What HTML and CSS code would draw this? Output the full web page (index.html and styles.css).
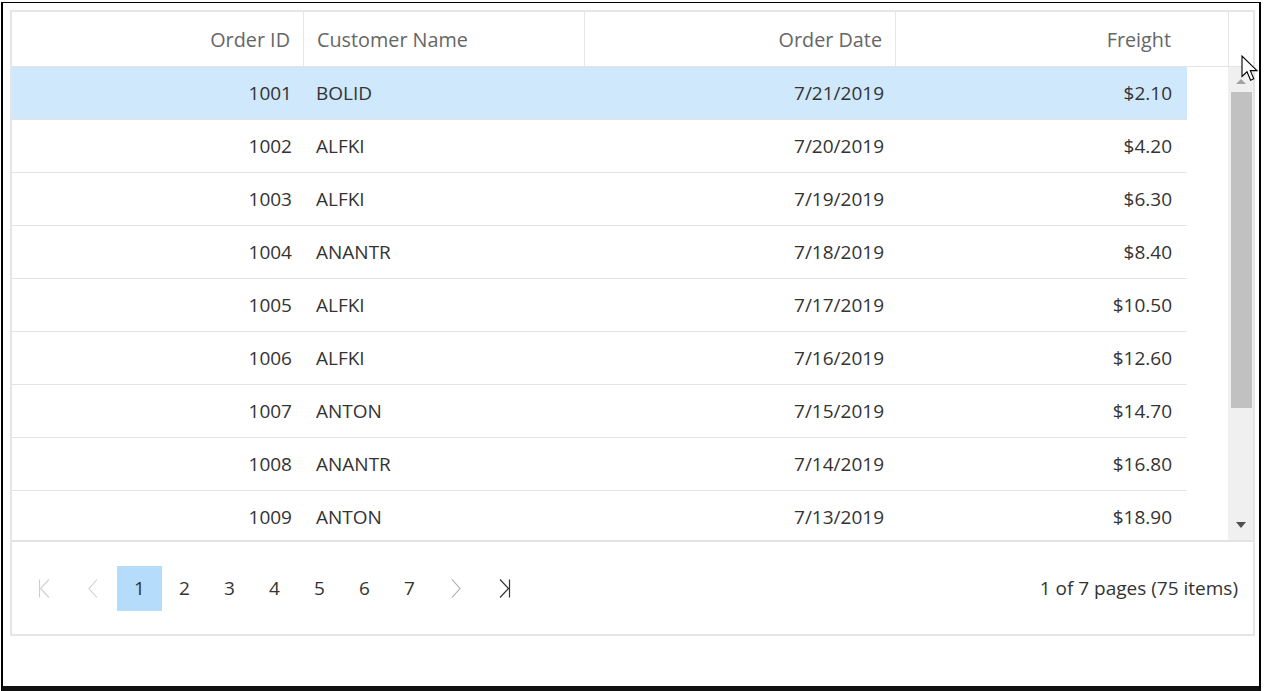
FILE: index.html
```html
<!DOCTYPE html>
<html>
<head>
<meta charset="utf-8">
<link rel="stylesheet" href="styles.css">
</head>
<body>
<div class="frame">
  <div class="grid">
    <div class="header">
      <div class="hcell right c1">Order ID</div>
      <div class="hcell left c2">Customer Name</div>
      <div class="hcell right c3">Order Date</div>
      <div class="hcell right c4">Freight</div>
      <div class="hcell filler"></div>
    </div>
    <div class="body">
      <div class="content">
        <div class="row selected"><div class="cell right">1001</div><div class="cell left">BOLID</div><div class="cell right">7/21/2019</div><div class="cell right last">$2.10</div></div>
        <div class="row"><div class="cell right">1002</div><div class="cell left">ALFKI</div><div class="cell right">7/20/2019</div><div class="cell right last">$4.20</div></div>
        <div class="row"><div class="cell right">1003</div><div class="cell left">ALFKI</div><div class="cell right">7/19/2019</div><div class="cell right last">$6.30</div></div>
        <div class="row"><div class="cell right">1004</div><div class="cell left">ANANTR</div><div class="cell right">7/18/2019</div><div class="cell right last">$8.40</div></div>
        <div class="row"><div class="cell right">1005</div><div class="cell left">ALFKI</div><div class="cell right">7/17/2019</div><div class="cell right last">$10.50</div></div>
        <div class="row"><div class="cell right">1006</div><div class="cell left">ALFKI</div><div class="cell right">7/16/2019</div><div class="cell right last">$12.60</div></div>
        <div class="row"><div class="cell right">1007</div><div class="cell left">ANTON</div><div class="cell right">7/15/2019</div><div class="cell right last">$14.70</div></div>
        <div class="row"><div class="cell right">1008</div><div class="cell left">ANANTR</div><div class="cell right">7/14/2019</div><div class="cell right last">$16.80</div></div>
        <div class="row"><div class="cell right">1009</div><div class="cell left">ANTON</div><div class="cell right">7/13/2019</div><div class="cell right last">$18.90</div></div>
      </div>
      <div class="scrollbar">
        <div class="arrow up"></div>
        <div class="thumb"></div>
        <div class="spacer"></div>
        <div class="arrow down"></div>
      </div>
    </div>
    <div class="pager">
      <div class="pages">
        <span class="nav disabled">
          <svg width="12" height="19" viewBox="0 0 12 19"><path d="M1.5 0.5V18.5M11 0.5L2.5 9.5L11 18.5" fill="none" stroke="currentColor" stroke-width="1.1"/></svg>
        </span>
        <span class="nav disabled">
          <svg width="10" height="19" viewBox="0 0 10 19"><path d="M9 0.5L1 9.5L9 18.5" fill="none" stroke="currentColor" stroke-width="1.1"/></svg>
        </span>
        <span class="num active">1</span>
        <span class="num">2</span>
        <span class="num">3</span>
        <span class="num">4</span>
        <span class="num">5</span>
        <span class="num">6</span>
        <span class="num">7</span>
        <span class="nav next">
          <svg width="10" height="19" viewBox="0 0 10 19"><path d="M1 0.5L9 9.5L1 18.5" fill="none" stroke="currentColor" stroke-width="1.1"/></svg>
        </span>
        <span class="nav lastnav">
          <svg width="12" height="19" viewBox="0 0 12 19"><path d="M10.5 0.5V18.5M1 0.5L9.5 9.5L1 18.5" fill="none" stroke="currentColor" stroke-width="1.2"/></svg>
        </span>
      </div>
      <div class="info">1 of 7 pages (75 items)</div>
    </div>
  </div>
  <svg class="cursor" width="19" height="28" viewBox="0 0 19 28"><path d="M1 1V21.5L6 16.8L9.6 25.2L12.8 23.8L9.3 15.6H16Z" fill="#fff" stroke="#000" stroke-width="1.1" stroke-linejoin="miter"/></svg>
</div>
</body>
</html>
```
FILE: styles.css
```css
* { box-sizing: border-box; }
html, body { margin: 0; padding: 0; background: #fff; }
body {
  font-family: "Open Sans", "Liberation Sans", sans-serif;
  font-size: 19px;
  color: #333;
  width: 1264px;
  height: 691px;
  overflow: hidden;
}
.frame {
  position: relative;
  margin: 2px 0 0 1px;
  width: 1260px;
  height: 689px;
  border-left: 2px solid #000;
  border-top: 1px solid #000;
  border-right: 2px solid #000;
  border-bottom: 5px solid #111;
  padding: 7px 0 0 7px;
}
.grid {
  width: 1245px;
  border: 2px solid #e6e6e6;
  background: #fff;
}
.header {
  display: grid;
  grid-template-columns: 292px 281px 311px 333px 24px;
  height: 55px;
  border-bottom: 1px solid #e3e3e3;
  color: #666;
  font-size: 19.8px;
}
.hcell {
  display: flex;
  align-items: center;
  border-right: 1px solid #e6e6e6;
  height: 54px;
}
.hcell.filler { border-right: none; }
.hcell.right { justify-content: flex-end; padding-right: 13px; }
.hcell.left { padding-left: 13px; }
.hcell.c4 { padding-right: 57px; }
.body {
  display: flex;
  height: 475px;
  border-bottom: 2px solid #e3e3e3;
}
.content {
  width: 1216px;
  overflow: hidden;
}
.row {
  display: grid;
  grid-template-columns: 292px 281px 311px 291px;
  width: 1175px;
  height: 53px;
  border-bottom: 1px solid #e3e3e3;
}
.row.selected { background: #cfe8fc; }
.cell {
  display: flex;
  align-items: center;
  height: 52px;
}
.cell.right { justify-content: flex-end; padding-right: 12px; }
.cell.left { padding-left: 12px; }
.cell.last { padding-right: 15px; }
.scrollbar {
  width: 25px;
  background: #f0f0f0;
  display: flex;
  flex-direction: column;
  align-items: center;
  padding: 0 1px 0 2px;
}
.arrow {
  width: 0;
  height: 0;
  border-left: 5px solid transparent;
  border-right: 5px solid transparent;
}
.arrow.up {
  border-bottom: 5px solid #a3a3a3;
  margin-top: 12px;
  margin-bottom: 8px;
}
.arrow.down {
  border-top: 6px solid #505050;
  margin-bottom: 12px;
}
.thumb {
  width: 21px;
  height: 316px;
  background: #c1c1c1;
}
.spacer { flex: 1; }
.pager {
  display: flex;
  align-items: center;
  justify-content: space-between;
  height: 92px;
  padding: 0 15px 0 8px;
}
.pages { display: flex; align-items: center; }
.nav {
  width: 48.5px;
  height: 45px;
  display: flex;
  align-items: center;
  justify-content: center;
}
.nav.disabled { color: #cfcfcf; }
.nav.next { color: #a8a8a8; }
.nav.lastnav { color: #333; }
.num {
  width: 45px;
  height: 45px;
  display: flex;
  align-items: center;
  justify-content: center;
  color: #333;
}
.num.active { background: #b5dcfb; }
.info { color: #333; }
.cursor {
  position: absolute;
  left: 1238px;
  top: 52px;
}
```
